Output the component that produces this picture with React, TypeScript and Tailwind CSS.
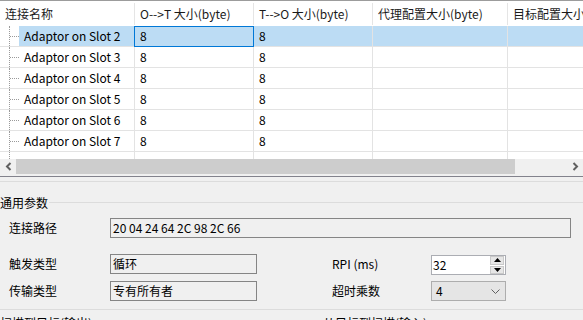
import React from 'react';

const slots = [2, 3, 4, 5, 6, 7];

function TreeStub({ selected, label }: { selected?: boolean; label?: string }) {
  return (
    <div className="flex h-full w-[135px] shrink-0 border-r border-[#e3e3e3]">
      <div className="w-[9px] shrink-0" />
      <div className="h-full border-l border-dotted border-[#9a9a9a]" />
      {label && <div className="w-[9px] shrink-0 self-center border-t border-dotted border-[#9a9a9a]" />}
      {label && (
        <div className={`flex flex-1 items-center pl-[5px] ${selected ? 'bg-[#bcdcf4]' : ''}`}>
          {label}
        </div>
      )}
    </div>
  );
}

function ConnRow({ slot, selected }: { slot: number; selected: boolean }) {
  const bg = selected ? 'bg-[#bcdcf4]' : '';
  return (
    <div className="flex h-[21px] border-b border-[#e3e3e3]">
      <TreeStub selected={selected} label={`Adaptor on Slot ${slot}`} />
      <div className={`relative flex w-[119px] shrink-0 items-center border-r border-[#e3e3e3] pl-[5px] ${bg}`}>
        8
        {selected && <div className="absolute -left-px -right-px top-0 -bottom-px border border-[#0078d7]" />}
      </div>
      <div className={`flex w-[119px] shrink-0 items-center border-r border-[#e3e3e3] pl-[5px] ${bg}`}>8</div>
      <div className={`w-[135px] shrink-0 border-r border-[#e3e3e3] ${bg}`} />
      <div className={`flex-1 ${bg}`} />
    </div>
  );
}

function Field({ text, className }: { text: string; className: string }) {
  return (
    <div className={`flex h-[20px] items-center border border-[#858585] bg-[#f0f0f0] pl-[2px] ${className}`}>
      {text}
    </div>
  );
}

export default function App() {
  return (
    <div className="h-[320px] w-[583px] overflow-hidden bg-[#f0f0f0] font-['Noto_Sans_CJK_SC',sans-serif] text-[12px] leading-none text-black">
      {/* grid */}
      <div className="border-t border-[#9c9c9c] bg-white">
        <div className="flex h-[25px] text-[#1a1a1a]">
          <div className="flex w-[135px] shrink-0 items-center pl-[5px]">
            <span className="flex-1">连接名称</span>
            <span className="h-[22px] border-r border-[#e5e5e5]" />
          </div>
          <div className="flex w-[119px] shrink-0 items-center pl-[5px]">
            <span className="flex-1 whitespace-nowrap">O--&gt;T 大小(byte)</span>
            <span className="h-[22px] border-r border-[#e5e5e5]" />
          </div>
          <div className="flex w-[119px] shrink-0 items-center pl-[5px]">
            <span className="flex-1 whitespace-nowrap">T--&gt;O 大小(byte)</span>
            <span className="h-[22px] border-r border-[#e5e5e5]" />
          </div>
          <div className="flex w-[135px] shrink-0 items-center pl-[5px]">
            <span className="flex-1 whitespace-nowrap">代理配置大小(byte)</span>
            <span className="h-[22px] border-r border-[#e5e5e5]" />
          </div>
          <div className="flex flex-1 items-center overflow-hidden whitespace-nowrap pl-[5px]">目标配置大小(byte)</div>
        </div>

        {slots.map((s, i) => (
          <ConnRow key={s} slot={s} selected={i === 0} />
        ))}

        <div className="flex h-[7px]">
          <TreeStub />
          <div className="w-[119px] shrink-0 border-r border-[#e3e3e3]" />
          <div className="w-[119px] shrink-0 border-r border-[#e3e3e3]" />
          <div className="w-[135px] shrink-0 border-r border-[#e3e3e3]" />
          <div className="flex-1" />
        </div>
      </div>

      {/* horizontal scrollbar */}
      <div className="flex h-[17px] items-start bg-[#f0f0f0]">
        <div className="flex h-[15px] w-[16px] shrink-0 items-center justify-center">
          <svg width="7" height="9" viewBox="0 0 7 9">
            <path d="M5.5 1 L2 4.5 L5.5 8" fill="none" stroke="#606060" strokeWidth="2" />
          </svg>
        </div>
        <div className="h-[15px] w-[499px] shrink-0 bg-[#cdcdcd]" />
        <div className="flex-1" />
        <div className="flex h-[15px] w-[16px] shrink-0 items-center justify-center">
          <svg width="7" height="9" viewBox="0 0 7 9">
            <path d="M1.5 1 L5 4.5 L1.5 8" fill="none" stroke="#606060" strokeWidth="2" />
          </svg>
        </div>
      </div>
      <div className="h-px bg-[#82828c]" />
      <div className="mt-[4px] h-px bg-[#dcdcdc]" />

      {/* general parameters */}
      <div className="mt-[12px] flex h-[17px] items-center">
        <span>通用参数</span>
        <div className="ml-px h-px flex-1 bg-[#dcdcdc]" />
      </div>

      <div className="mt-[7px] flex items-center pl-[9px]">
        <div className="w-[101px]">连接路径</div>
        <Field text="20 04 24 64 2C 98 2C 66" className="w-[461px]" />
      </div>

      <div className="mt-[15px] flex items-center pl-[9px]">
        <div className="w-[101px]">触发类型</div>
        <Field text="循环" className="w-[147px]" />
        <div className="ml-[75px] w-[99px]">RPI (ms)</div>
        <div className="mt-[2px] flex h-[20px] w-[75px] items-center border border-[#abadb3] bg-white pl-px">
          <span className="flex-1">32</span>
          <div className="mr-px flex h-[18px] w-[14px] flex-col gap-px">
            <div className="flex flex-1 items-center justify-center border border-[#c9c9c9] bg-[#e6e6e6]">
              <svg width="7" height="4" viewBox="0 0 7 4">
                <path d="M0 4 L3.5 0 L7 4 Z" fill="#000" />
              </svg>
            </div>
            <div className="flex flex-1 items-center justify-center border border-[#c9c9c9] bg-[#e6e6e6]">
              <svg width="7" height="4" viewBox="0 0 7 4">
                <path d="M0 0 L3.5 4 L7 0 Z" fill="#000" />
              </svg>
            </div>
          </div>
        </div>
      </div>

      <div className="mt-[6px] flex items-center pl-[9px]">
        <div className="w-[101px]">传输类型</div>
        <Field text="专有所有者" className="w-[147px]" />
        <div className="ml-[75px] w-[99px]">超时乘数</div>
        <div className="flex h-[20px] w-[75px] items-center border border-[#adadad] bg-[#e5e5e5] pl-[4px] pr-[5px]">
          <span className="flex-1">4</span>
          <svg width="9" height="5" viewBox="0 0 9 5">
            <path d="M0.5 0.5 L4.5 4.5 L8.5 0.5" fill="none" stroke="#606060" strokeWidth="1" />
          </svg>
        </div>
      </div>

      <div className="mt-[8px] h-px bg-[#dcdcdc]" />

      <div className="mt-[4px] flex h-[17px] items-center">
        <span className="w-[323px] shrink-0">扫描到目标(输出)</span>
        <span>从目标到扫描(输入)</span>
      </div>
    </div>
  );
}
